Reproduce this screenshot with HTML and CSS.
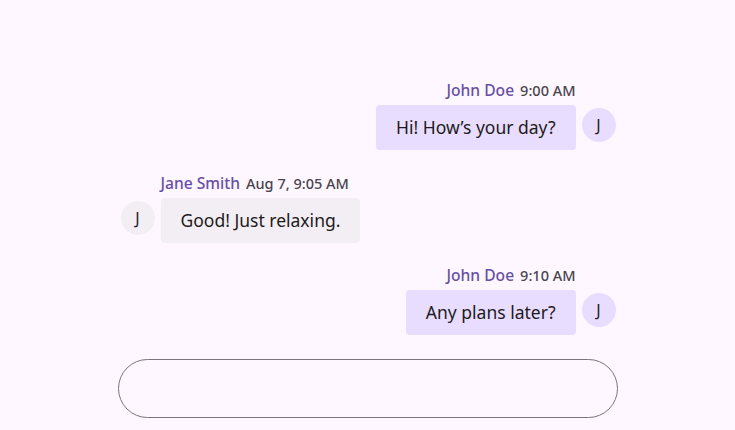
FILE: index.html
```html
<!DOCTYPE html>
<html>
<head>
<meta charset="utf-8">
<link rel="stylesheet" href="styles.css">
</head>
<body>
<div class="chat">
  <div class="list">
    <div class="msg sent">
      <div class="col">
        <div class="head"><span class="name">John Doe</span><span class="time">9:00 AM</span></div>
        <div class="bubble">Hi! How’s your day?</div>
      </div>
      <div class="avatar">J</div>
    </div>
    <div class="msg recv">
      <div class="avatar gray">J</div>
      <div class="col">
        <div class="head"><span class="name">Jane Smith</span><span class="time">Aug 7, 9:05 AM</span></div>
        <div class="bubble gray">Good! Just relaxing.</div>
      </div>
    </div>
    <div class="msg sent">
      <div class="col">
        <div class="head"><span class="name">John Doe</span><span class="time">9:10 AM</span></div>
        <div class="bubble">Any plans later?</div>
      </div>
      <div class="avatar">J</div>
    </div>
  </div>
  <div class="input"></div>
</div>
</body>
</html>
```
FILE: styles.css
```css
html, body {
  margin: 0;
  background: #fef7ff;
  font-family: "Noto Sans", "Open Sans", sans-serif;
  color: #1d1b20;
}
.chat {
  width: 500px;
  margin: 0 auto;
  padding-top: 80px;
}
.list {
  display: flex;
  flex-direction: column;
  gap: 22.5px;
  padding: 0 2px 0 3px;
}
.msg {
  display: flex;
  align-items: flex-end;
  gap: 6px;
}
.msg.sent { justify-content: flex-end; }
.col {
  display: flex;
  flex-direction: column;
  gap: 5px;
}
.sent .col { align-items: flex-end; }
.recv .col { align-items: flex-start; }
.head {
  display: flex;
  align-items: baseline;
  gap: 6px;
  line-height: 20px;
}
.name {
  font-size: 15.6px;
  font-weight: 500;
  color: #6750a4;
}
.time {
  font-size: 14.5px;
  font-weight: 500;
  color: #49454f;
}
.bubble {
  background: #e8ddff;
  border-radius: 4px;
  padding: 10px 20px;
  font-size: 17.5px;
  font-weight: 400;
  line-height: 25px;
}
.bubble.gray { background: #f3eef4; }
.avatar {
  width: 34px;
  height: 34px;
  border-radius: 50%;
  background: #e8ddff;
  display: flex;
  align-items: center;
  justify-content: center;
  font-size: 16px;
  font-weight: 400;
  margin-bottom: 8px;
  flex: none;
}
.avatar.gray { background: #f3eef4; }
.input {
  margin-top: 24px;
  height: 57px;
  border: 1px solid #79747e;
  border-radius: 30px;
}
```
